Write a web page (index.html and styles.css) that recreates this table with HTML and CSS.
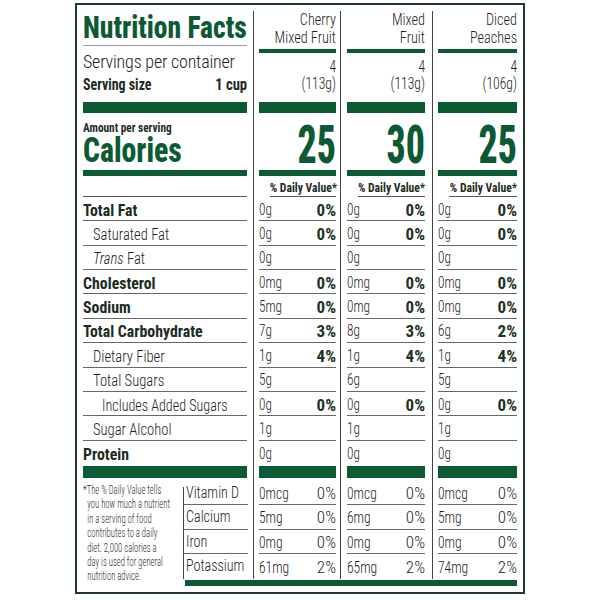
FILE: index.html
```html
<!DOCTYPE html>
<html>
<head>
<meta charset="utf-8">
<link rel="stylesheet" href="styles.css">
</head>
<body>
<div class="label">
  <div class="main">
    <div class="names">
      <div class="title"><span>Nutrition Facts</span></div>
      <div class="servings">Servings per container</div>
      <div class="size"><span class="sl">Serving size</span><span class="sr">1 cup</span></div>
      <div class="bar thick"></div>
      <div class="calblock">
        <div class="aps">Amount per serving</div>
        <div class="cal">Calories</div>
      </div>
      <div class="bar med"></div>
      <div class="dv blank"></div>
      <div class="row b"><span>Total Fat</span></div>
      <div class="row i1"><span>Saturated Fat</span></div>
      <div class="row i1"><span><i>Trans</i> Fat</span></div>
      <div class="row b"><span>Cholesterol</span></div>
      <div class="row b"><span>Sodium</span></div>
      <div class="row b"><span>Total Carbohydrate</span></div>
      <div class="row i1"><span>Dietary Fiber</span></div>
      <div class="row i1"><span>Total Sugars</span></div>
      <div class="row i2"><span>Includes Added Sugars</span></div>
      <div class="row i1"><span>Sugar Alcohol</span></div>
      <div class="row b last"><span>Protein</span></div>
      <div class="bar bottom"></div>
    </div>

    <div class="col c1">
      <div class="prod">Cherry<br>Mixed Fruit</div>
      <div class="bar thin"></div>
      <div class="serv">4<br>(113g)</div>
      <div class="bar thick"></div>
      <div class="calnum"><span>25</span></div>
      <div class="bar med"></div>
      <div class="dv">% Daily Value*</div>
      <div class="row"><span>0g</span><b>0%</b></div>
      <div class="row"><span>0g</span><b>0%</b></div>
      <div class="row"><span>0g</span></div>
      <div class="row"><span>0mg</span><b>0%</b></div>
      <div class="row"><span>5mg</span><b>0%</b></div>
      <div class="row"><span>7g</span><b>3%</b></div>
      <div class="row"><span>1g</span><b>4%</b></div>
      <div class="row"><span>5g</span></div>
      <div class="row"><span>0g</span><b>0%</b></div>
      <div class="row"><span>1g</span></div>
      <div class="row last"><span>0g</span></div>
      <div class="bar bottom"></div>
    </div>

    <div class="col c2">
      <div class="prod">Mixed<br>Fruit</div>
      <div class="bar thin"></div>
      <div class="serv">4<br>(113g)</div>
      <div class="bar thick"></div>
      <div class="calnum"><span>30</span></div>
      <div class="bar med"></div>
      <div class="dv">% Daily Value*</div>
      <div class="row"><span>0g</span><b>0%</b></div>
      <div class="row"><span>0g</span><b>0%</b></div>
      <div class="row"><span>0g</span></div>
      <div class="row"><span>0mg</span><b>0%</b></div>
      <div class="row"><span>0mg</span><b>0%</b></div>
      <div class="row"><span>8g</span><b>3%</b></div>
      <div class="row"><span>1g</span><b>4%</b></div>
      <div class="row"><span>6g</span></div>
      <div class="row"><span>0g</span><b>0%</b></div>
      <div class="row"><span>1g</span></div>
      <div class="row last"><span>0g</span></div>
      <div class="bar bottom"></div>
    </div>

    <div class="col c3">
      <div class="prod">Diced<br>Peaches</div>
      <div class="bar thin"></div>
      <div class="serv">4<br>(106g)</div>
      <div class="bar thick"></div>
      <div class="calnum"><span>25</span></div>
      <div class="bar med"></div>
      <div class="dv">% Daily Value*</div>
      <div class="row"><span>0g</span><b>0%</b></div>
      <div class="row"><span>0g</span><b>0%</b></div>
      <div class="row"><span>0g</span></div>
      <div class="row"><span>0mg</span><b>0%</b></div>
      <div class="row"><span>0mg</span><b>0%</b></div>
      <div class="row"><span>6g</span><b>2%</b></div>
      <div class="row"><span>1g</span><b>4%</b></div>
      <div class="row"><span>5g</span></div>
      <div class="row"><span>0g</span><b>0%</b></div>
      <div class="row"><span>1g</span></div>
      <div class="row last"><span>0g</span></div>
      <div class="bar bottom"></div>
    </div>
  </div>

  <div class="foot">
    <div class="note">
      <div class="nl first">*The % Daily Value tells</div>
      <div class="nl">you how much a nutrient</div>
      <div class="nl">in a serving of food</div>
      <div class="nl">contributes to a daily</div>
      <div class="nl">diet. 2,000 calories a</div>
      <div class="nl">day is used for general</div>
      <div class="nl">nutrition advice.</div>
    </div>
    <div class="ftable">
      <div class="frow first">
        <div class="fl"><span>Vitamin D</span></div>
        <div class="fc c1"><div class="fv"><span>0mcg</span><em>0%</em></div></div>
        <div class="fc c2"><div class="fv"><span>0mcg</span><em>0%</em></div></div>
        <div class="fc c3"><div class="fv"><span>0mcg</span><em>0%</em></div></div>
      </div>
      <div class="frow">
        <div class="fl"><span>Calcium</span></div>
        <div class="fc c1"><div class="fv"><span>5mg</span><em>0%</em></div></div>
        <div class="fc c2"><div class="fv"><span>6mg</span><em>0%</em></div></div>
        <div class="fc c3"><div class="fv"><span>5mg</span><em>0%</em></div></div>
      </div>
      <div class="frow">
        <div class="fl"><span>Iron</span></div>
        <div class="fc c1"><div class="fv"><span>0mg</span><em>0%</em></div></div>
        <div class="fc c2"><div class="fv"><span>0mg</span><em>0%</em></div></div>
        <div class="fc c3"><div class="fv"><span>0mg</span><em>0%</em></div></div>
      </div>
      <div class="frow last">
        <div class="fl"><span>Potassium</span></div>
        <div class="fc c1"><div class="fv"><span>61mg</span><em>2%</em></div></div>
        <div class="fc c2"><div class="fv"><span>65mg</span><em>2%</em></div></div>
        <div class="fc c3"><div class="fv"><span>74mg</span><em>2%</em></div></div>
      </div>
      <div class="bar fbar"></div>
    </div>
  </div>
</div>
</body>
</html>
```
FILE: styles.css
```css
* { box-sizing: border-box; }

body {
  margin: 0;
  background: #fff;
  font-family: Roboto, "Open Sans", "Liberation Sans", sans-serif;
  font-stretch: 75%;
  font-weight: 300;
  color: #1e1e1e;
}

.label {
  width: 450px;
  margin: 3px 0 0 75px;
  border: 2px solid #22372c;
  padding: 6px 0 6px 6px;
}

.main { display: flex; }

.bar { background: #0c5a34; }
.bar.thin { height: 4px; margin-top: 3px; }
.bar.thick { height: 11px; margin-top: 10px; }
.bar.med { height: 6px; }
.bar.bottom { height: 12px; margin-top: 1px; }

/* left names column */
.names { width: 170px; padding-right: 6px; }

.title {
  height: 35px;
  padding-bottom: 2px;
  border-bottom: 1px solid #9a9a9a;
  font-size: 32px;
  line-height: 32px;
  font-weight: 800;
  color: #0c5a34;
  white-space: nowrap;
}
.title span {
  display: inline-block;
  transform: scaleX(.86);
  transform-origin: left center;
}

.servings {
  margin-top: 6px;
  font-size: 18px;
  line-height: 20px;
  white-space: nowrap;
  letter-spacing: -0.2px;
}

.size {
  margin-top: 3px;
  display: flex;
  justify-content: space-between;
  font-size: 17px;
  line-height: 18px;
  font-weight: 700;
  color: #1c2c22;
}
.size .sl { transform: scaleX(.82); transform-origin: left center; }
.size .sr { transform: scaleX(.86); transform-origin: right center; }
.names .bar.thick { margin-top: 9px; }

.calblock { height: 57px; padding-top: 8px; }
.aps {
  font-size: 13px;
  line-height: 14px;
  font-weight: 700;
  color: #1c2c22;
  white-space: nowrap;
  transform: scaleX(.87);
  transform-origin: left center;
}
.cal {
  margin-top: 1px;
  font-size: 35px;
  line-height: 30px;
  font-weight: 800;
  color: #0c5a34;
  transform: scaleX(.85);
  transform-origin: left center;
}

.dv {
  height: 21px;
  padding-top: 3px;
  border-bottom: 1px solid #555;
  font-size: 13.5px;
  line-height: 17px;
  font-weight: 700;
  color: #1c2c22;
  text-align: right;
  white-space: nowrap;
  transform-origin: right center;
}
.col .dv { transform: scaleX(.86); }

.row {
  height: 24.36px;
  border-bottom: 1px solid #666;
  display: flex;
  align-items: center;
  justify-content: space-between;
  font-size: 16px;
  line-height: 18px;
  padding-top: 2px;
  white-space: nowrap;
}
.row.last { border-bottom: 0; }
.row span { transform: scaleX(.83); transform-origin: left center; }

.names .row { font-size: 17px; }
.names .row span { transform: scaleX(.86); }
.names .row.i2 span { transform: scaleX(.83); }
.names .row.b span { transform: scaleX(.93); }
.row.b { font-weight: 700; color: #1c2c22; }
.row.i1 { padding-left: 10px; }
.row.i2 { padding-left: 19px; }
.row i { font-style: italic; }
.row b { font-weight: 700; color: #1c3325; font-size: 17px; }

/* value columns */
.col { border-left: 1px solid #444; }
.c1 { width: 87px; padding: 0 4px 0 5px; }
.c2 { width: 92px; padding: 0 7px 0 6px; }
.c3 { width: 91px; padding: 0 6px 0 5px; }

.prod {
  height: 35px;
  font-size: 16px;
  line-height: 17.5px;
  text-align: right;
  white-space: nowrap;
  transform: scaleX(.89);
  transform-origin: right center;
}
.serv {
  margin-top: 5px;
  font-size: 16px;
  line-height: 17px;
  text-align: right;
  transform: scaleX(.85);
  transform-origin: right center;
}

.calnum {
  height: 57px;
  padding-top: 9px;
  display: flex;
  justify-content: flex-end;
  font-size: 54px;
  line-height: 46px;
  font-weight: 800;
  color: #0c5a34;
}
.calnum span { transform: scaleX(.7); transform-origin: right center; }

/* footer */
.foot { display: flex; }

.note {
  width: 100px;
  padding-top: 5px;
  font-size: 12px;
  line-height: 14.4px;
  color: #2e2e2e;
  white-space: nowrap;
  transform: scaleX(.72);
  transform-origin: left top;
}
.nl { padding-left: 6px; }
.nl.first { padding-left: 0; }

.ftable { width: 340px; }

.frow { display: flex; height: 24.5px; }
.frow.first { height: 27.5px; }

.fl {
  width: 65px;
  margin-right: 5px;
  padding-left: 2px;
  border-left: 1px solid #444;
  border-bottom: 1px solid #666;
  font-size: 17px;
  line-height: 23px;
  white-space: nowrap;
}
.fl span { display: inline-block; transform: scaleX(.83); transform-origin: left center; }
.frow.first .fl {
  border-left: 0;
  padding-left: 3px;
  padding-top: 3px;
  background: linear-gradient(#444, #444) left 9px / 1px calc(100% - 9px) no-repeat;
}
.frow.last .fl { border-bottom: 0; }

.fc { border-left: 1px solid #444; height: 100%; }
.frow.first .fv { padding-top: 3px; }

.fv {
  height: 100%;
  display: flex;
  justify-content: space-between;
  align-items: center;
  border-bottom: 1px solid #666;
  font-size: 17px;
  line-height: 20px;
}
.fv span { transform: scaleX(.8); transform-origin: left center; }
.fv em { font-style: normal; }
.frow.last .fv { border-bottom: 0; }

.bar.fbar {
  height: 6px;
  margin: 1px 6px 0 2px;
}
```
